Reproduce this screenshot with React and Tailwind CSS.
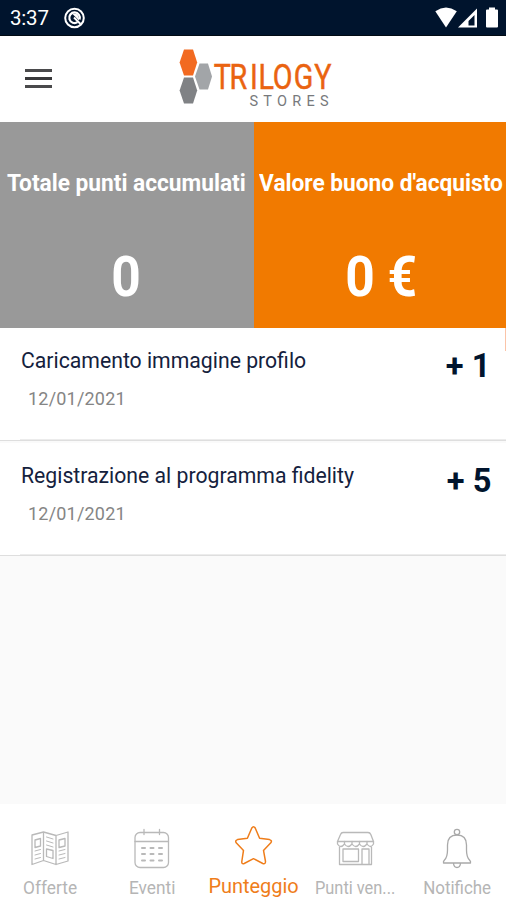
const movements = [
  { id: 1, title: "Caricamento immagine profilo", date: "12/01/2021", points: "+ 1", offset: "mr-[16px]" },
  { id: 2, title: "Registrazione al programma fidelity", date: "12/01/2021", points: "+ 5", offset: "mr-[15px]" },
];

function StatusBar() {
  return (
    <div className="flex h-9 items-center border-b border-[#020b14] bg-[#00142d] pr-2 pl-[10px] text-white">
      <span className="mt-[2px] text-[20.5px] leading-none tracking-[-0.2px]">3:37</span>
      <svg className="ml-[15px]" width="22" height="24" viewBox="0 0 22 24" fill="none" stroke="#fff">
        <circle cx="10.5" cy="12" r="9.3" strokeWidth="2" />
        <path d="M13.5 16.2 A5.3 5.3 0 1 1 15.6 13.5" strokeWidth="2.2" />
        <path d="M10 11.5 L16.5 18" strokeWidth="2" />
        <path d="M8.5 8 C12 6 15.5 9 15 14.5Z" fill="#fff" stroke="none" />
      </svg>
      <div className="ml-auto flex items-center">
        <svg width="63" height="24" viewBox="435 6 63 24" fill="#fff">
          <path d="M435.3 11.2 Q446 4 456.8 11.2 L446 27.5Z" />
          <path fillRule="evenodd" d="M458 27.5 L477 8.5 V27.5Z M468.5 25.5 H474.5 V15 L468.5 21Z" />
          <path d="M489 7.5 H495 V9.5 H497 Q498 9.5 498 10.5 V26.5 Q498 27.5 497 27.5 H487 Q486 27.5 486 26.5 V10.5 Q486 9.5 487 9.5 H489Z" />
        </svg>
      </div>
    </div>
  );
}

function Logo() {
  return (
    <svg width="160" height="68" viewBox="176 45 160 68" fontFamily="Roboto, sans-serif">
      <path d="M184 49.5 H193 L197.2 62.5 L193 75.5 H184 L179.6 62.5Z" fill="#f26a21" />
      <path d="M184 77.5 H193 L197.2 90.5 L193 103.5 H184 L179.6 90.5Z" fill="#808285" />
      <path d="M199.5 63.5 H208 L212 76.5 L208 89.5 H199.5 L195 76.5Z" fill="#a2a5a8" />
      <text
        transform="translate(213.5 89.3) scale(0.82 1)"
        x="0.2 19.6 44.6 54.8 72.4 98 122.8"
        fontSize="35"
        fill="#ea6310"
        stroke="#ea6310"
        strokeWidth="0.5"
      >
        TRILOGY
      </text>
      <text x="249.5" y="105.7" fontSize="14.5" fill="#77797c" textLength="79" lengthAdjust="spacing">STORES</text>
    </svg>
  );
}

function Header() {
  return (
    <header className="flex h-[86px] items-start bg-white pt-[9px] pl-[25px]">
      <button className="mt-[24px] flex w-[27px] flex-col gap-[5px]" aria-label="Menu">
        <span className="h-[3px] w-full bg-[#4a4a4c]" />
        <span className="h-[3px] w-full bg-[#38383a]" />
        <span className="h-[3px] w-full bg-[#4a4a4c]" />
      </button>
      <div className="ml-[124px]">
        <Logo />
      </div>
    </header>
  );
}

function Movement({ item }) {
  return (
    <li className="flex flex-col bg-white">
      <div className="flex h-[111px] items-start justify-between pl-[21px]">
        <div>
          <p className="mt-[20px] origin-left scale-x-[0.964] text-[22px] leading-[26px] whitespace-nowrap text-[#14213d]">{item.title}</p>
          <p className="mt-[14px] ml-[7px] text-[18px] leading-[22px] tracking-[0.2px] text-[#858585]">{item.date}</p>
        </div>
        <p className={`mt-[17px] origin-right scale-x-[0.96] text-[34px] leading-[40px] font-bold text-[#00142d] ${item.offset}`}>{item.points}</p>
      </div>
      <div className="ml-5 h-px bg-[#ececec]" />
      <div className="h-px bg-[#dedede]" />
      <div className="h-[2px] bg-[#fafafa]" />
    </li>
  );
}

const iconProps = { width: 42, height: 44, fill: "none", strokeWidth: 1.3, strokeLinejoin: "round", strokeLinecap: "round" };

function BrochureIcon() {
  return (
    <svg {...iconProps} viewBox="29 826 42 44" stroke="#b9b9b9">
      <path d="M32 835 L43.5 832 L56 835.5 L68 832 V861 L56 864.5 L43.5 860.5 L32 864.5Z M43.5 832 V860.5 M56 835.5 V864.5" />
      <path d="M35 840 L40.5 838.5 V846 L35 847.5Z M46.5 849 L53 850.5 V858.5 L46.5 856.5Z M59 840 L65 838.5 V846 L59 847.5Z" />
      <path d="M35 851 L40.5 849.5 M35 855 L40.5 853.5 M35 859 L40.5 857.5 M46.5 837 L53 839 M46.5 841 L53 843 M46.5 845 L53 847 M59 851 L65 849.5 M59 855 L65 853.5 M59 859 L65 857.5" strokeWidth="1" />
    </svg>
  );
}

function CalendarIcon() {
  return (
    <svg {...iconProps} viewBox="131 826 42 44" stroke="#b9b9b9">
      <rect x="135" y="832.5" width="33.5" height="35" rx="5" />
      <path d="M135 841.5 H168.5 M144 829.5 V834.5 M159.5 829.5 V834.5" />
      <path d="M142 848 H145 M150.5 848 H153.5 M159 848 H162 M142 854 H145 M150.5 854 H153.5 M159 854 H162 M142 860.5 H145 M150.5 860.5 H153.5 M159 860.5 H162" strokeWidth="2" />
    </svg>
  );
}

function StarIcon() {
  return (
    <svg {...iconProps} viewBox="233 824 42 44" stroke="#ef7d1a" strokeWidth="1.5">
      <path d="M251.8 828 Q253.5 825.5 255.2 828 L259.6 838.2 L269.5 839.6 Q272.5 840.5 270.8 842.8 L263.5 850.4 L265.5 861.5 Q265.5 864.5 262.8 863.5 L253.5 858.7 L244.2 863.5 Q241.5 864.5 241.8 861.5 L243.5 850.4 L236.2 842.8 Q234.8 840.5 237.5 839.6 L247.4 838.2Z" />
    </svg>
  );
}

function ShopIcon() {
  return (
    <svg {...iconProps} viewBox="335 826 42 44" stroke="#b9b9b9">
      <path d="M343 832.5 H368 Q370 832.5 370.8 834.5 L373.5 841.5 H337.5 L340.5 834.5 Q341.3 832.5 343 832.5Z" />
      <path d="M337.5 841.5 V844 Q340.5 849 344.5 844 Q348 849 352 844 Q355.5 849 359.5 844 Q363 849 367 844 Q370.5 849 373.5 844 V841.5 M344.5 844 V841.5 M352 844 V841.5 M359.5 844 V841.5 M367 844 V841.5" />
      <path d="M339.5 847 V864.5 H371.5 V847 M343 849 H358.5 V861.5 H343Z M362 864.5 V849 H369 V864.5" />
    </svg>
  );
}

function BellIcon() {
  return (
    <svg {...iconProps} viewBox="436.5 826 42 44" stroke="#a9a9a9">
      <circle cx="457.5" cy="832" r="2.7" />
      <path d="M444 863 Q443.5 861.5 445 860 Q448 857 448 850 V845 Q448 835 457.5 835 Q467 835 467 845 V850 Q467 857 470 860 Q471.5 861.5 471 863Z M454 863.5 Q454.5 867.5 457.5 867.5 Q460.5 867.5 461 863.5" />
    </svg>
  );
}

const tabs = [
  { label: "Offerte", Icon: BrochureIcon, text: "scale-x-[0.96]" },
  { label: "Eventi", Icon: CalendarIcon, text: "scale-x-[0.96]" },
  { label: "Punteggio", Icon: StarIcon, active: true },
  { label: "Punti ven...", Icon: ShopIcon, text: "scale-x-[0.91]" },
  { label: "Notifiche", Icon: BellIcon, text: "scale-x-[0.94]" },
];

function TabBar() {
  return (
    <nav className="grid h-24 grid-cols-[100px_104px_99px_105px_98px] bg-white">
      {tabs.map(({ label, Icon, active, text }) => (
        <a key={label} className={`flex flex-col items-center whitespace-nowrap ${active ? "pt-5" : "pt-[22px]"}`}>
          <Icon />
          <span
            className={
              active
                ? "mt-[6px] scale-x-[0.95] text-[21px] leading-6 text-[#ef7d1a]"
                : `mt-[6px] text-[18px] leading-6 text-[#b5b5b5] ${text}`
            }
          >
            {label}
          </span>
        </a>
      ))}
    </nav>
  );
}

export default function App() {
  return (
    <div className="flex h-[900px] w-[506px] flex-col overflow-hidden bg-[#fafafa] font-[Roboto,sans-serif]">
      <StatusBar />
      <Header />

      {/* Points summary */}
      <section className="grid h-[206px] grid-cols-[254px_252px] text-center font-bold whitespace-nowrap text-white">
        <div className="flex flex-col items-center bg-[#999]">
          <h2 className="mt-[47px] mr-[1px] scale-x-[0.945] text-[24px] leading-7">Totale punti accumulati</h2>
          <p className="mt-[48px] mr-[1px] scale-x-[0.92] text-[56px] leading-[64px]">0</p>
        </div>
        <div className="flex flex-col items-center bg-[#f17a00]">
          <h2 className="mt-[47px] ml-[2px] scale-x-[0.945] text-[24px] leading-7">Valore buono d'acquisto</h2>
          <p className="mt-[48px] ml-[2px] scale-x-[0.92] text-[56px] leading-[64px]">0 €</p>
        </div>
      </section>

      <ul className="relative flex-1">
        {movements.map((item) => (
          <Movement key={item.id} item={item} />
        ))}
        {/* scroll indicator */}
        <li className="absolute top-0 right-0 h-[23px] w-px bg-[#fbc4a8]" />
      </ul>

      <TabBar />
    </div>
  );
}
